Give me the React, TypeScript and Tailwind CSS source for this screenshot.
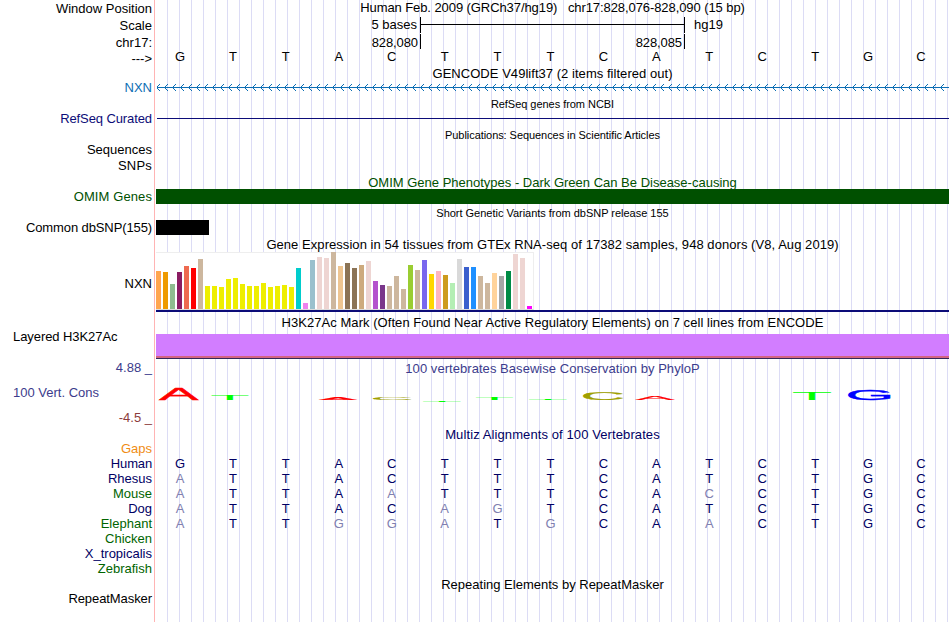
import React from 'react';

type Item = { text?: string; h: number; className?: string };

// Left hand labels. `h` is the full row height, text sits in its first 15px.
const labels: Item[] = [
  { text: 'Window Position', h: 17 },
  { text: 'Scale', h: 17 },
  { text: 'chr17:', h: 16 },
  { text: '--->', h: 29 },
  { text: 'NXN', h: 31, className: 'text-[#0c6eb4]' },
  { text: 'RefSeq Curated', h: 31, className: 'text-[#0c0c78] tracking-[-0.1px]' },
  { text: 'Sequences', h: 16 },
  { text: 'SNPs', h: 31, className: 'tracking-[0.2px]' },
  { text: 'OMIM Genes', h: 31, className: 'text-[#005000] tracking-[0.1px]' },
  { text: 'Common dbSNP(155)', h: 56, className: 'tracking-[-0.11px]' },
  { text: 'NXN', h: 53 },
  { text: 'Layered H3K27Ac', h: 31, className: 'self-start pl-[13px] tracking-[-0.07px]' },
  { text: '4.88 _', h: 25, className: 'text-[#3c3c8c]' },
  { text: '100 Vert. Cons', h: 25, className: 'self-start pl-[13px] text-[#3c3c8c]' },
  { text: '-4.5 _', h: 31, className: 'text-[#8c3c3c]' },
  { text: 'Gaps', h: 15, className: 'text-[#f08c14]' },
  { text: 'Human', h: 15, className: 'text-[#000064] tracking-[-0.15px]' },
  { text: 'Rhesus', h: 15, className: 'text-[#000064]' },
  { text: 'Mouse', h: 15, className: 'text-[#006400]' },
  { text: 'Dog', h: 15, className: 'text-[#000064]' },
  { text: 'Elephant', h: 15, className: 'text-[#006400]' },
  { text: 'Chicken', h: 15, className: 'text-[#006400]' },
  { text: 'X_tropicalis', h: 15, className: 'text-[#000064]' },
  { text: 'Zebrafish', h: 30, className: 'text-[#006400]' },
  { text: 'RepeatMasker', h: 15, className: 'tracking-[-0.08px]' },
];

const expression: [number, string][] = [
  [38, '#ffa54f'], [37, '#ee9a00'], [25, '#8fbc8f'], [37, '#8b1c62'], [43, '#ee6a50'], [41, '#ff0000'],
  [50, '#cdb79e'], [23, '#eeee00'], [23, '#eeee00'], [22, '#eeee00'], [30, '#eeee00'], [31, '#eeee00'],
  [25, '#eeee00'], [23, '#eeee00'], [23, '#eeee00'], [26, '#eeee00'], [22, '#eeee00'], [23, '#eeee00'],
  [24, '#eeee00'], [22, '#eeee00'], [41, '#00cdcd'], [6, '#ee82ee'], [49, '#9ac0cd'], [52, '#eed5d2'],
  [51, '#eed5d2'], [57, '#cdb79e'], [43, '#eec591'], [46, '#8b7355'], [41, '#8b7355'], [44, '#cdaa7d'],
  [48, '#eed5d2'], [28, '#b452cd'], [24, '#7a378b'], [23, '#cdb79e'], [33, '#cdb79e'], [20, '#cdb79e'],
  [44, '#9acd32'], [39, '#cdb79e'], [49, '#7a67ee'], [35, '#ffd700'], [38, '#ffb6c1'], [34, '#cd9b1d'],
  [26, '#b4eeb4'], [50, '#d9d9d9'], [42, '#3a5fcd'], [42, '#1e90ff'], [33, '#cdb79e'], [26, '#cdb79e'],
  [36, '#ffd39b'], [33, '#a6a6a6'], [38, '#008b45'], [55, '#eed5d2'], [51, '#eed5d2'], [3, '#ff00ff'],
];

// letter, left, right, top, bottom inside the conservation track
const logo: [string, number, number, number, number][] = [
  ['A', 2.5, 43, 15.2, 26],
  ['T', 55.5, 92.5, 21, 26],
  ['A', 162.5, 201.5, 24, 26],
  ['C', 217, 256, 24, 26],
  ['T', 267, 305, 26.6, 28],
  ['T', 320, 357, 24, 26],
  ['T', 373, 411, 24.6, 26],
  ['C', 427, 467.5, 18.2, 25.8],
  ['A', 479, 519, 22, 26],
  ['T', 637, 675, 18, 26],
  ['G', 692, 735, 15.3, 25.8],
];

// x offset and width of the drawn part of each letter, in em
const ink: Record<string, { x: number; w: number; stroke: number; color: string }> = {
  A: { x: -0.008, w: 0.684, stroke: 2, color: '#ff0000' },
  C: { x: 0.04, w: 0.655, stroke: 2, color: '#a0a000' },
  G: { x: 0.04, w: 0.685, stroke: 2, color: '#0000ff' },
  T: { x: 0.022, w: 0.566, stroke: 0, color: '#00ff00' },
};

const human = 'GTTACTTTCATCTGC';
const alignments = [human, 'ATTACTTTCATCTGC', 'ATTAATTTCACCTGC', 'ATTACAGTCATCTGC', 'ATTGGATGCAACTGC'];

function Title({ children, className = '' }: { children: React.ReactNode; className?: string }) {
  return <div className={`h-[15px] text-center leading-[15px] whitespace-pre ${className}`}>{children}</div>;
}

function Bases({ seq, className = '', compare }: { seq: string; className?: string; compare?: string }) {
  return (
    <div className={`-ml-[2.5px] grid h-[15px] w-[794px] grid-cols-15 text-center leading-[15px] ${className}`}>
      {seq.split('').map((base, i) => (
        <span key={i} className={compare && compare[i] !== base ? 'text-[#8080b0]' : ''}>{base}</span>
      ))}
    </div>
  );
}

function Ruler() {
  return (
    <>
      <div className="flex h-4 items-center">
        <div className="w-[261px] pb-px text-right leading-[15px]">5 bases</div>
        <div className="ml-[3px] flex h-4 w-[265px] items-center border-x border-black">
          <div className="mb-px h-px w-full bg-black" />
        </div>
        <div className="ml-[9px] pb-px leading-[15px]">hg19</div>
      </div>
      <div className="mt-px flex h-[15px] tracking-[-0.1px]">
        <div className="w-[265px] border-r border-black pr-[2px] text-right leading-[17px]">828,080</div>
        <div className="w-[264px] border-r border-black pr-[2px] text-right leading-[17px]">828,085</div>
      </div>
    </>
  );
}

function GeneLine() {
  return (
    <svg width="793" height="7" className="block" shapeRendering="crispEdges">
      <path d="M1 3.5H793" stroke="#0c6eb4" />
      {Array.from({ length: 99 }, (_, i) => (
        <g key={i} fill="#0c6eb4" transform={`translate(${i * 8} 0)`}>
          <rect x="1" y="2" width="1" height="1" />
          <rect x="2" y="1" width="1" height="1" />
          <rect x="3" y="0" width="1" height="1" />
          <rect x="1" y="4" width="1" height="1" />
          <rect x="2" y="5" width="1" height="1" />
          <rect x="3" y="6" width="1" height="1" />
        </g>
      ))}
    </svg>
  );
}

function Expression() {
  return (
    <div className="flex h-[58px] w-[378px] items-end gap-[2px] border border-l-0 border-[#eeeeee] border-b-[#dcdcdc] bg-white">
      {expression.map(([height, color], i) => (
        <div key={i} className="w-[5px] shrink-0" style={{ height, backgroundColor: color }} />
      ))}
    </div>
  );
}

function Conservation() {
  return (
    <svg width="793" height="34" className="block" fontFamily="Liberation Sans, Arial, sans-serif" fontSize="100">
      {logo.map(([letter, left, right, top, bottom], i) => {
        const g = ink[letter];
        const sx = (right - left) / (g.w * 100);
        const sy = (bottom - top) / 69;
        return (
          <text
            key={i}
            fill={g.color}
            stroke={g.color}
            strokeWidth={g.stroke}
            transform={`translate(${left - g.x * 100 * sx} ${bottom}) scale(${sx} ${sy})`}
          >
            {letter}
          </text>
        );
      })}
    </svg>
  );
}

export default function App() {
  return (
    <div className="flex h-[622px] w-[950px] overflow-hidden bg-white font-['Liberation_Sans',Arial,sans-serif] text-[13px] text-black">
      <div className="flex w-[155px] shrink-0 flex-col items-end border-r border-[#ffb4b4] pt-px">
        {labels.map(({ text, h, className = '' }, i) => (
          <div key={i} className={`shrink-0 pr-[2px] leading-[15px] whitespace-pre ${className}`} style={{ height: h }}>
            {text}
          </div>
        ))}
      </div>

      <div className="ml-px w-[793px] bg-[repeating-linear-gradient(to_right,transparent_0_11px,#dcdcf5_11px_12px)]">
        <Title className="tracking-[-0.08px]">Human Feb. 2009 (GRCh37/hg19)   chr17:828,076-828,090 (15 bp)</Title>
        <div className="mt-[2px]"><Ruler /></div>
        <Bases seq={human} />
        <Title className="mt-[2px] tracking-[0.04px]">GENCODE V49lift37 (2 items filtered out)</Title>
        <div className="mt-[3px]"><GeneLine /></div>
        <Title className="mt-[6px] text-[11px] tracking-[-0.04px]">RefSeq genes from NCBI</Title>
        <div className="mt-[6px] ml-px h-px bg-[#0c0c78]" />
        <Title className="mt-[9px] text-[11px] tracking-[-0.06px]">Publications: Sequences in Scientific Articles</Title>
        <Title className="mt-[32px] text-[#005000]">OMIM Gene Phenotypes - Dark Green Can Be Disease-causing</Title>
        <div className="-mt-px h-[15px] bg-[#005000]" />
        <Title className="mt-[2px] text-[11px] tracking-[-0.02px]">Short Genetic Variants from dbSNP release 155</Title>
        <div className="-mt-px h-[15px] w-[53px] bg-black" />
        <Title className="mt-[2px] tracking-[0.055px]">Gene Expression in 54 tissues from GTEx RNA-seq of 17382 samples, 948 donors (V8, Aug 2019)</Title>
        <Expression />
        <div className="h-[2px] bg-[#0c0c78]" />
        <Title className="mt-[3px] tracking-[0.05px]">H3K27Ac Mark (Often Found Near Active Regulatory Elements) on 7 cell lines from ENCODE</Title>
        <div className="mt-[4px] h-[25px] border-b border-[#32285a] bg-[#d27dff]">
          <div className="h-[22px]" />
          <div className="h-[2px] bg-[#d26482]" />
        </div>
        <Title className="mt-[2px] tracking-[0.05px] text-[#3c3c8c]">100 vertebrates Basewise Conservation by PhyloP</Title>
        <div className="-mt-[2px]"><Conservation /></div>
        <Title className="mt-[19px] tracking-[0.1px] text-[#000064]">Multiz Alignments of 100 Vertebrates</Title>
        <div className="mt-[14px] text-[#000064]">
          {alignments.map((seq, i) => (
            <Bases key={i} seq={seq} compare={human} />
          ))}
        </div>
        <Title className="mt-[46px]">Repeating Elements by RepeatMasker</Title>
      </div>
    </div>
  );
}
